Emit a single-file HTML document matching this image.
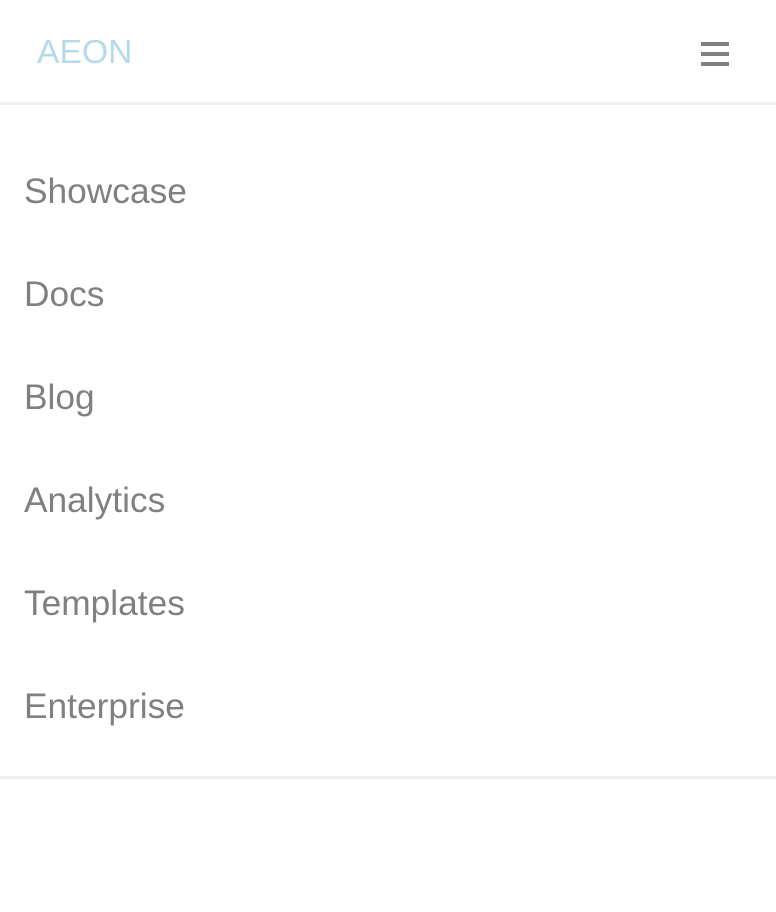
<!DOCTYPE html>
<html><head><style>
body{margin:0;width:776px;height:912px;background:#fff;font-family:"Liberation Sans",sans-serif;position:relative;overflow:hidden}
.logo{position:absolute;left:37px;top:33px;font-size:33.7px;color:#b4dbe9;line-height:38px}
.hb{position:absolute;left:701px;width:28px;height:4px;background:#808080}
.l{position:absolute;left:0;width:776px;height:3px;background:#f0f0f0}
.it{position:absolute;left:24px;font-size:35.3px;color:#808080;line-height:38px}
</style></head><body>
<div class="logo">AEON</div>
<div class="hb" style="top:42px"></div>
<div class="hb" style="top:52px"></div>
<div class="hb" style="top:62px"></div>
<div class="l" style="top:102px"></div>
<div class="it" style="top:173px">Showcase</div>
<div class="it" style="top:276px">Docs</div>
<div class="it" style="top:379px">Blog</div>
<div class="it" style="top:482px">Analytics</div>
<div class="it" style="top:585px">Templates</div>
<div class="it" style="top:688px">Enterprise</div>
<div class="l" style="top:776px"></div>
</body></html>
